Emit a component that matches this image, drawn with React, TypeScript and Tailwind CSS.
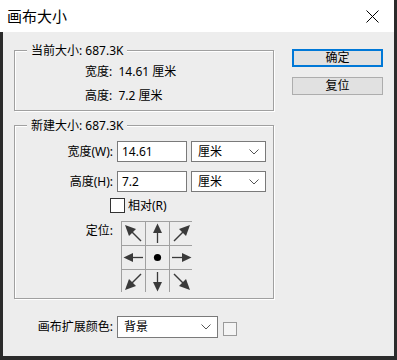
import React from "react";

const FONT = { fontFamily: '"Noto Sans", "Noto Sans CJK SC", sans-serif' };

function Straight({ rot }: { rot: number }) {
  return (
    <svg width="23" height="23" viewBox="0 0 23 23">
      <g transform={`rotate(${rot} 11.5 11.5)`}>
        <line x1="11.5" y1="21" x2="11.5" y2="9" stroke="#3a3a3a" strokeWidth="1.3" />
        <polygon points="11.5,1.5 7,11 16,11" fill="#3a3a3a" />
      </g>
    </svg>
  );
}

function Diag({ rot }: { rot: number }) {
  return (
    <svg width="23" height="23" viewBox="0 0 23 23">
      <g transform={`rotate(${rot} 11.5 11.5)`}>
        <line x1="4" y1="19" x2="14" y2="9" stroke="#3a3a3a" strokeWidth="1.4" />
        <polygon points="20,3 16,14 9,7" fill="#3a3a3a" />
      </g>
    </svg>
  );
}

function Dot() {
  return (
    <svg width="23" height="23" viewBox="0 0 23 23">
      <circle cx="11.5" cy="11.5" r="3.6" fill="#000" />
    </svg>
  );
}

function Chevron() {
  return (
    <svg width="10" height="6" viewBox="0 0 10 6">
      <polyline points="0.5,0.5 5,5 9.5,0.5" fill="none" stroke="#555" strokeWidth="1" />
    </svg>
  );
}

function Select({ text, w }: { text: string; w: string }) {
  return (
    <div className={`${w} h-full bg-white border border-[#7a7a7a] flex items-center justify-between pl-[6px] pr-[6px]`}>
      <span className="text-[12px] leading-[16px] text-black">{text}</span>
      <Chevron />
    </div>
  );
}

const groupBox =
  "relative border border-[#a0a0a0] shadow-[inset_1px_1px_0_#ffffff,1px_1px_0_#ffffff]";

export default function App() {
  const cells = [
    <Diag key="nw" rot={270} />,
    <Straight key="n" rot={0} />,
    <Diag key="ne" rot={0} />,
    <Straight key="w" rot={270} />,
    <Dot key="c" />,
    <Straight key="e" rot={90} />,
    <Diag key="sw" rot={180} />,
    <Straight key="s" rot={180} />,
    <Diag key="se" rot={90} />,
  ];
  return (
    <div className="w-[397px] h-[360px] flex flex-col bg-[#2b2b2b] pr-[3px] pb-[4px] text-black" style={FONT}>
      <div className="h-[32px] bg-white flex items-center justify-between pl-[7px] pr-[15px] shrink-0">
        <span className="text-[15px] leading-[20px]">画布大小</span>
        <svg width="13" height="13" viewBox="0 0 13 13">
          <line x1="0.5" y1="0.5" x2="12.5" y2="12.5" stroke="#000" strokeWidth="1" />
          <line x1="12.5" y1="0.5" x2="0.5" y2="12.5" stroke="#000" strokeWidth="1" />
        </svg>
      </div>
      <div className="flex-1 bg-[#ededed] border-l-[3px] border-[#2b2b2b] pl-[11px] pt-[17px] flex">
        <div className="w-[260px] flex flex-col">
          {/* current size */}
          <div className={`${groupBox} mt-[1px] pt-[13px] pb-[6px] pl-[70px] flex flex-col gap-[8px]`}>
            <span className="absolute -top-[8px] left-[12px] px-[4px] bg-[#ededed] text-[12px] leading-[16px]">
              当前大小: 687.3K
            </span>
            <div className="text-[12px] leading-[16px]">宽度:&nbsp; 14.61 厘米</div>
            <div className="text-[12px] leading-[16px]">高度:&nbsp; 7.2 厘米</div>
          </div>
          {/* new size */}
          <div className={`${groupBox} mt-[14px] pt-[15px] pb-[6px] flex flex-col`}>
            <span className="absolute -top-[8px] left-[12px] px-[4px] bg-[#ededed] text-[12px] leading-[16px]">
              新建大小: 687.3K
            </span>
            <div className="flex h-[21px] items-center">
              <span className="w-[98px] text-right text-[12px] leading-[16px]">宽度(W):</span>
              <div className="ml-[4px] w-[70px] h-full bg-white border border-[#7a7a7a] flex items-center pl-[4px] text-[12px] leading-[16px]">
                14.61
              </div>
              <div className="ml-[4px] h-full">
                <Select text="厘米" w="w-[75px]" />
              </div>
            </div>
            <div className="flex h-[21px] items-center mt-[9px]">
              <span className="w-[98px] text-right text-[12px] leading-[16px]">高度(H):</span>
              <div className="ml-[4px] w-[70px] h-full bg-white border border-[#7a7a7a] flex items-center pl-[4px] text-[12px] leading-[16px]">
                7.2
              </div>
              <div className="ml-[4px] h-full">
                <Select text="厘米" w="w-[75px]" />
              </div>
            </div>
            <div className="flex items-center h-[15px] mt-[6px] pl-[95px]">
              <div className="w-[15px] h-[15px] bg-white border border-[#333]" />
              <span className="ml-[3px] text-[12px] leading-[16px]">相对(R)</span>
            </div>
            <div className="flex mt-[8px]">
              <span className="w-[98px] text-right text-[12px] leading-[16px] mt-[2px]">定位:</span>
              <div className="ml-[8px] grid grid-cols-[repeat(3,23px)] grid-rows-[repeat(3,23px)] gap-px bg-[#a0a0a0] border border-[#a0a0a0] w-[71px] h-[71px]">
                {cells.map((c, i) => (
                  <div key={i} className="bg-[#ededed] flex items-center justify-center">
                    {c}
                  </div>
                ))}
              </div>
            </div>
          </div>
          {/* canvas extension color */}
          <div className="flex mt-[17px] h-[22px] items-center">
            <span className="w-[99px] text-right text-[12px] leading-[16px]">画布扩展颜色:</span>
            <div className="ml-[4px] h-full">
              <Select text="背景" w="w-[101px]" />
            </div>
            <div className="ml-[5px] mt-[3px] w-[14px] h-[14px] bg-[#f4f4f4] border border-[#9a9a9a]" />
          </div>
        </div>
        <div className="ml-[18px] flex flex-col">
          <div className="w-[91px] h-[18px] bg-[#e1e1e1] border-2 border-[#0078d7] flex items-center justify-center text-[12px] leading-[14px]">
            确定
          </div>
          <div className="mt-[10px] w-[91px] h-[18px] bg-[#e1e1e1] border border-[#adadad] flex items-center justify-center text-[12px] leading-[14px]">
            复位
          </div>
        </div>
      </div>
    </div>
  );
}
